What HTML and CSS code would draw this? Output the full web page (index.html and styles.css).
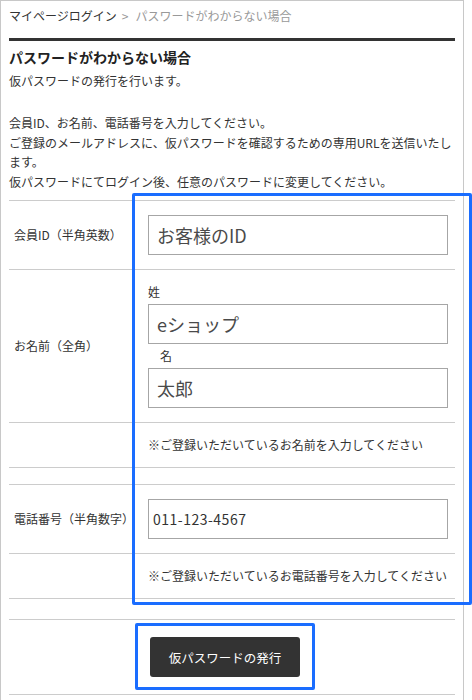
FILE: index.html
```html
<!DOCTYPE html>
<html lang="ja">
<head>
<meta charset="utf-8">
<title>パスワードがわからない場合</title>
<link rel="stylesheet" href="styles.css">
</head>
<body>
<div class="page">
  <nav class="breadcrumb"><span class="crumb-link">マイページログイン</span><span class="crumb-sep">&gt;</span><span class="crumb-current">パスワードがわからない場合</span></nav>

  <section class="intro">
    <h1 class="title">パスワードがわからない場合</h1>
    <p class="lead">仮パスワードの発行を行います。</p>
    <p class="desc">会員ID、お名前、電話番号を入力してください。<br>ご登録のメールアドレスに、仮パスワードを確認するための専用URLを送信いたします。<br>仮パスワードにてログイン後、任意のパスワードに変更してください。</p>
  </section>

  <div class="form-table">
    <div class="row">
      <div class="label">会員ID（半角英数）</div>
      <div class="value"><input class="field big" type="text" value="お客様のID"></div>
    </div>
    <div class="row row-name">
      <div class="label">お名前（全角）</div>
      <div class="value">
        <div class="sub">姓</div>
        <input class="field big" type="text" value="eショップ">
        <div class="sub">　名</div>
        <input class="field big" type="text" value="太郎">
      </div>
    </div>
    <div class="row row-note">
      <div class="label"></div>
      <div class="value note">※ご登録いただいているお名前を入力してください</div>
    </div>
  </div>

  <div class="form-table gap-a">
    <div class="row">
      <div class="label">電話番号（半角数字）</div>
      <div class="value"><input class="field tel" type="text" value="011-123-4567"></div>
    </div>
    <div class="row row-note">
      <div class="label"></div>
      <div class="value note">※ご登録いただいているお電話番号を入力してください</div>
    </div>
  </div>

  <div class="form-table gap-b">
    <div class="row row-btn">
      <button class="submit" type="button">仮パスワードの発行</button>
    </div>
  </div>

  <div class="focus focus-form"></div>
  <div class="focus focus-btn"></div>
</div>
</body>
</html>
```
FILE: styles.css
```css
* { box-sizing: border-box; }

html, body {
  margin: 0;
  padding: 0;
  background: #fff;
}

body {
  font-family: "Noto Sans CJK JP", "Noto Sans", sans-serif;
  font-size: 12px;
  color: #333;
}

.page {
  position: relative;
  width: 464px;
  min-height: 700px;
  border: 1px solid #c8c8c8;
  border-bottom: none;
  padding: 5px 8px 0 8px;
}

.breadcrumb {
  line-height: 20px;
  height: 20px;
  white-space: nowrap;
}

.crumb-link { color: #333; }
.crumb-sep { color: #999; margin: 0 7px 0 5px; }
.crumb-current { color: #999; }

.intro {
  margin-top: 12px;
  border-top: 3px solid #333;
}

.title {
  margin: 6px 0 0;
  font-size: 14px;
  font-weight: bold;
  line-height: 20px;
  color: #222;
}

.lead {
  margin: 4px 0 0;
  line-height: 20px;
}

.desc {
  margin: 22px 0 0;
  line-height: 19.5px;
}

.form-table {
  margin-top: 9px;
  border-top: 1px solid #ccc;
}

.form-table.gap-a { margin-top: 16px; }
.form-table.gap-b { margin-top: 20px; }

.row {
  display: grid;
  grid-template-columns: 134px 1fr;
  border-bottom: 1px solid #ccc;
}

.label {
  display: flex;
  align-items: center;
  padding-left: 5px;
  line-height: 20px;
  white-space: nowrap;
}

.value {
  padding: 14px 6px 14px 5px;
}

.row-name .value {
  padding-top: 10px;
}

.sub {
  line-height: 24px;
  height: 24px;
}

.field {
  display: block;
  width: 300px;
  height: 40px;
  margin: 0;
  border: 1px solid #a6a6a6;
  border-radius: 0;
  background: #fff;
  font-family: "Noto Sans CJK JP", "Noto Sans", sans-serif;
  outline: none;
}

.field.big {
  font-size: 18px;
  font-weight: 400;
  color: #4a4a4a;
  padding: 0 8px;
}

.field.tel {
  font-size: 14px;
  color: #333;
  padding: 0 4px;
  letter-spacing: 0.5px;
}

.row-note .value.note {
  padding-top: 12px;
  padding-bottom: 12px;
  line-height: 20px;
  white-space: nowrap;
}

.row-btn {
  display: block;
  padding: 17px 0;
}

.submit {
  display: block;
  margin-left: 141px;
  width: 150px;
  height: 40px;
  border: none;
  border-radius: 3px;
  background: #333;
  color: #fff;
  font-family: "Noto Sans CJK JP", "Noto Sans", sans-serif;
  font-size: 12.5px;
  cursor: pointer;
}

.focus {
  position: absolute;
  border: 3px solid #1a6dff;
  border-radius: 2px;
  pointer-events: none;
}

.focus-form {
  left: 131px;
  top: 192px;
  width: 340px;
  height: 412px;
}

.focus-btn {
  left: 134px;
  top: 622px;
  width: 180px;
  height: 67px;
}
```
